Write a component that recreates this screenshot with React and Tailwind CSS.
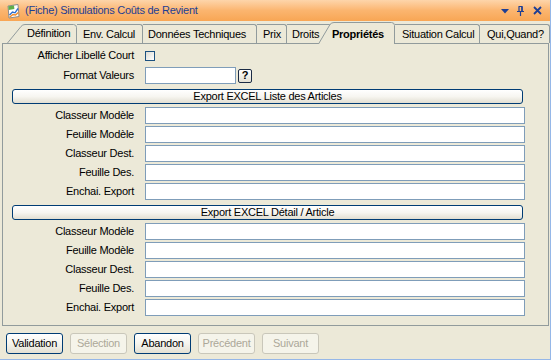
import React from "react";

const GROUP = ["Classeur Modèle", "Feuille Modèle", "Classeur Dest.", "Feuille Des.", "Enchai. Export"];

function Label({ children }) {
  return (
    <div className="w-[131px] shrink-0 text-right whitespace-nowrap leading-none">{children}</div>
  );
}

function InputRow({ label }) {
  return (
    <div className="flex items-center h-[17px] pr-[23px]">
      <Label>{label}</Label>
      <div className="ml-[11px] flex-1 h-[17px] bg-white border border-[#7f9db9]" />
    </div>
  );
}

function ExportButton({ children, mt }) {
  return (
    <div
      className={`${mt} ml-[9px] mr-[25px] h-[15px] rounded-[3px] border border-[#003c74] bg-gradient-to-b from-white via-[#f7f6f1] to-[#e2dfd2] flex items-center justify-center leading-none`}
    >
      {children}
    </div>
  );
}

function Btn({ children, disabled }) {
  return (
    <div
      className={
        disabled
          ? "w-[57px] h-[21px] rounded-[3px] border border-[#c9c7ba] bg-[#f5f4ea] text-[#aca899] flex items-center justify-center leading-none"
          : "w-[57px] h-[21px] rounded-[3px] border border-[#003c74] bg-gradient-to-b from-white via-[#f5f4ee] to-[#e3e0d3] text-black flex items-center justify-center leading-none"
      }
    >
      {children}
    </div>
  );
}

function Tab({ w, pl, children }) {
  return (
    <div
      className={`${w} ${pl} h-[19px] shrink-0 border-t border-r border-[#919b9c] rounded-tr-[3px] flex items-center leading-none whitespace-nowrap overflow-hidden`}
    >
      {children}
    </div>
  );
}

export default function App() {
  return (
    <div className="w-[551px] h-[360px] bg-[#ece9d8] flex flex-col font-['Liberation_Sans',Arial,sans-serif] text-[11px] tracking-[-0.25px] text-black overflow-hidden border-r border-b border-[#95b7e8]">
      {/* Title bar */}
      <div className="h-[21px] shrink-0 flex items-center bg-gradient-to-b from-[#fdd5aa] via-[#fbb56f] to-[#f8a654]">
        <div className="w-[25px] shrink-0 flex items-center justify-center pl-[1px]">
          <svg width="16" height="16" viewBox="0 0 16 16">
            <path d="M3 3 L13 1.5 L14 13.5 L4 15 Z" fill="#ffffff" stroke="#8c8c8c" strokeWidth="1" />
            <path d="M3.3 3.2 L9 2.4 L9.4 6 L3.7 7 Z" fill="#5fae4a" />
            <path d="M4.5 12 L7.5 9 L10 9.8 L13 5.5" fill="none" stroke="#2e6fd0" strokeWidth="1.4" />
            <path d="M4.8 14 L8 11.5 L10.5 12 L13.4 9.5" fill="none" stroke="#f08a2a" strokeWidth="1.4" />
          </svg>
        </div>
        <span className="text-[#1d3e94] leading-none whitespace-nowrap">(Fiche) Simulations Coûts de Revient</span>
        <div className="ml-auto flex items-center mr-[8px]">
          <svg width="8" height="5" viewBox="0 0 8 5" className="mr-[8px] mt-[2px]">
            <path d="M0 0 H8 L4 4.5 Z" fill="#1d3e94" />
          </svg>
          <svg width="7" height="10" viewBox="0 0 7 10" className="mr-[9px]">
            <path d="M1.5 0.5 H5.5 M2 0.5 V5.5 M5 0.5 V5.5 M0 5.5 H7 M3.5 5.5 V10" fill="none" stroke="#1d3e94" strokeWidth="1.2" />
            <rect x="4.3" y="0.5" width="1.4" height="5" fill="#1d3e94" />
          </svg>
          <svg width="9" height="9" viewBox="0 0 9 9">
            <path d="M1 1 L8 8 M8 1 L1 8" stroke="#1d3e94" strokeWidth="1.8" />
          </svg>
        </div>
      </div>

      {/* Tab strip */}
      <div className="h-[22px] shrink-0 flex items-end pl-[7px]">
        <div className="relative w-[70px] h-[19px] shrink-0 flex items-center pl-[20px] leading-none whitespace-nowrap">
          <svg className="absolute inset-0" width="70" height="19" viewBox="0 0 70 19">
            <path d="M0.5 19 L14 2.5 Q15.5 0.5 18 0.5 H66.5 Q69.5 0.5 69.5 3.5 V19" fill="#ece9d8" stroke="#919b9c" strokeWidth="1" />
          </svg>
          <span className="relative">Définition</span>
        </div>
        <Tab w="w-[66px]" pl="pl-[6px]">Env. Calcul</Tab>
        <Tab w="w-[114px]" pl="pl-[5px]">Données Techniques</Tab>
        <Tab w="w-[30px]" pl="pl-[6px]">Prix</Tab>
        <Tab w="w-[45px]" pl="pl-[5px]">Droits</Tab>
        <div className="relative z-10 -ml-[14px] -mb-px w-[77px] h-[22px] shrink-0 flex items-center pl-[14px] pt-[2px] leading-none whitespace-nowrap font-bold">
          <svg className="absolute inset-0" width="77" height="22" viewBox="0 0 77 22">
            <path d="M0.5 22 L12 2.5 Q13.5 0.5 16 0.5 H73.5 Q76.5 0.5 76.5 3.5 V22" fill="#ece9d8" stroke="#919b9c" strokeWidth="1" />
          </svg>
          <span className="relative">Propriétés</span>
        </div>
        <Tab w="w-[85px]" pl="pl-[7px]">Situation Calcul</Tab>
        <Tab w="w-[70px]" pl="pl-[7px]">Qui,Quand?</Tab>
      </div>

      {/* Panel */}
      <div className="ml-[2px] mr-[1px] h-[283px] shrink-0 border border-[#919b9c] flex flex-col">
        <div className="mt-[3px] h-[17px] flex items-center">
          <Label>Afficher Libellé Court</Label>
          <div className="ml-[11px] w-[10px] h-[10px] border border-[#1c5180] bg-gradient-to-br from-[#dcdbd3] to-white" />
        </div>
        <div className="mt-[3px] h-[17px] flex items-center">
          <Label>Format Valeurs</Label>
          <div className="ml-[11px] w-[91px] h-[17px] bg-white border border-[#7f9db9]" />
          <div className="ml-[2px] w-[14px] h-[14px] rounded-[2px] border border-[#1b2b45] bg-gradient-to-b from-white to-[#e3e0d3] flex items-center justify-center font-bold text-[11px] leading-none tracking-normal">
            ?
          </div>
        </div>

        <ExportButton mt="mt-[5px]">Export EXCEL Liste des Articles</ExportButton>
        <div className="mt-[3px] flex flex-col gap-[2px]">
          {GROUP.map((l) => (
            <InputRow key={"a" + l} label={l} />
          ))}
        </div>

        <ExportButton mt="mt-[5px]">Export EXCEL Détail / Article</ExportButton>
        <div className="mt-[3px] flex flex-col gap-[2px]">
          {GROUP.map((l) => (
            <InputRow key={"b" + l} label={l} />
          ))}
        </div>
      </div>

      {/* Bottom buttons */}
      <div className="pt-[7px] pl-[6px] flex gap-[7px]">
        <Btn>Validation</Btn>
        <Btn disabled>Sélection</Btn>
        <Btn>Abandon</Btn>
        <Btn disabled>Précédent</Btn>
        <Btn disabled>Suivant</Btn>
      </div>
    </div>
  );
}
